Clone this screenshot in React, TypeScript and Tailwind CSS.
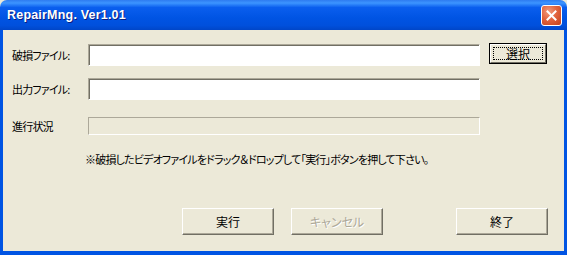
import React from "react";

const jp = "font-['MS_UI_Gothic','Noto_Sans_CJK_JP',sans-serif] [font-feature-settings:'palt'] text-[12px] leading-[16px] text-black";
const jpSm = "font-['MS_UI_Gothic','Noto_Sans_CJK_JP',sans-serif] [font-feature-settings:'palt'] text-[11px] tracking-[-0.8px] leading-[16px] text-black";

function Field({ label, disabled }: { label: string; disabled?: boolean }) {
  return (
    <div className="flex items-center">
      <div className={`w-[85px] pl-[9px] ${jpSm}`}>{label}</div>
      {disabled ? (
        <div className="w-[392px] h-[18px] bg-[#ECE9D8] border border-t-[#ACA899] border-l-[#ACA899] border-b-white border-r-white" />
      ) : (
        <div className="w-[392px] h-[22px] bg-white border border-t-[#ACA899] border-l-[#ACA899] border-b-white border-r-white shadow-[inset_1px_1px_0_#716F64]" />
      )}
    </div>
  );
}

function Btn({ children, w = "w-[92px]", h = "h-[27px]", disabled, focused }: { children: React.ReactNode; w?: string; h?: string; disabled?: boolean; focused?: boolean }) {
  return (
    <div
      className={`${w} ${h} bg-[#ECE9D8] flex border ${
        focused ? "border-black" : "border-t-white border-l-white border-b-[#716F64] border-r-[#716F64]"
      }`}
    >
      <div
        className={`flex-1 flex ${
          focused
            ? "border border-t-white border-l-white border-b-[#716F64] border-r-[#716F64] p-[2px]"
            : "shadow-[inset_-1px_-1px_0_#ACA899]"
        }`}
      >
        <div className={`flex-1 flex items-center justify-center ${focused ? "border border-dotted border-black" : ""}`}>
          <span className={`${jp} ${disabled ? "!text-[#ACA899] [text-shadow:1px_1px_0_#fff]" : ""}`}>{children}</span>
        </div>
      </div>
    </div>
  );
}

export default function App() {
  return (
    <div className="w-[567px] h-[255px] flex flex-col bg-[#ECE9D8]">
      {/* title bar */}
      <div className="h-[30px] rounded-t-[7px] bg-[linear-gradient(to_bottom,#2E7BF0_0%,#3D95FF_10%,#0A5EEE_25%,#0054E3_60%,#0050DC_85%,#0046C8_100%)] flex items-center justify-between pl-[7px] pr-[5px]">
        <span className="font-['Liberation_Sans',sans-serif] font-bold text-[12.5px] text-white tracking-[0.2px] [text-shadow:1px_1px_0_#0A1E80]">
          RepairMng. Ver1.01
        </span>
        <div className="w-[21px] h-[21px] rounded-[3px] border border-white bg-[radial-gradient(circle_at_35%_30%,#F29C7E_0%,#E2643E_45%,#C2401A_100%)] flex items-center justify-center">
          <svg width="11" height="11" viewBox="0 0 11 11">
            <path d="M1.5 1.5 L9.5 9.5 M9.5 1.5 L1.5 9.5" stroke="#fff" strokeWidth="2" strokeLinecap="square" />
          </svg>
        </div>
      </div>

      {/* body */}
      <div className="flex-1 flex flex-col border-l-[3px] border-r-[3px] border-b-[4px] border-[#0054E3] pt-[13px]">
        <div className="flex items-start">
          <div className="mt-[1px]">
            <Field label="破損ファイル:" />
          </div>
          <div className="ml-[9px]">
            <Btn w="w-[58px]" h="h-[21px]" focused>選択</Btn>
          </div>
        </div>
        <div className="mt-[12px]">
          <Field label="出力ファイル:" />
        </div>
        <div className="mt-[17px]">
          <Field label="進行状況" disabled />
        </div>
        <div className={`mt-[16px] pl-[82px] ${jpSm}`}>
          ※破損したビデオファイルをドラック＆ドロップして「実行」ボタンを押して下さい。
        </div>
        <div className="mt-[41px] flex pl-[179px]">
          <Btn>実行</Btn>
          <div className="ml-[17px]">
            <Btn disabled>キャンセル</Btn>
          </div>
          <div className="ml-[73px]">
            <Btn>終了</Btn>
          </div>
        </div>
      </div>
    </div>
  );
}
